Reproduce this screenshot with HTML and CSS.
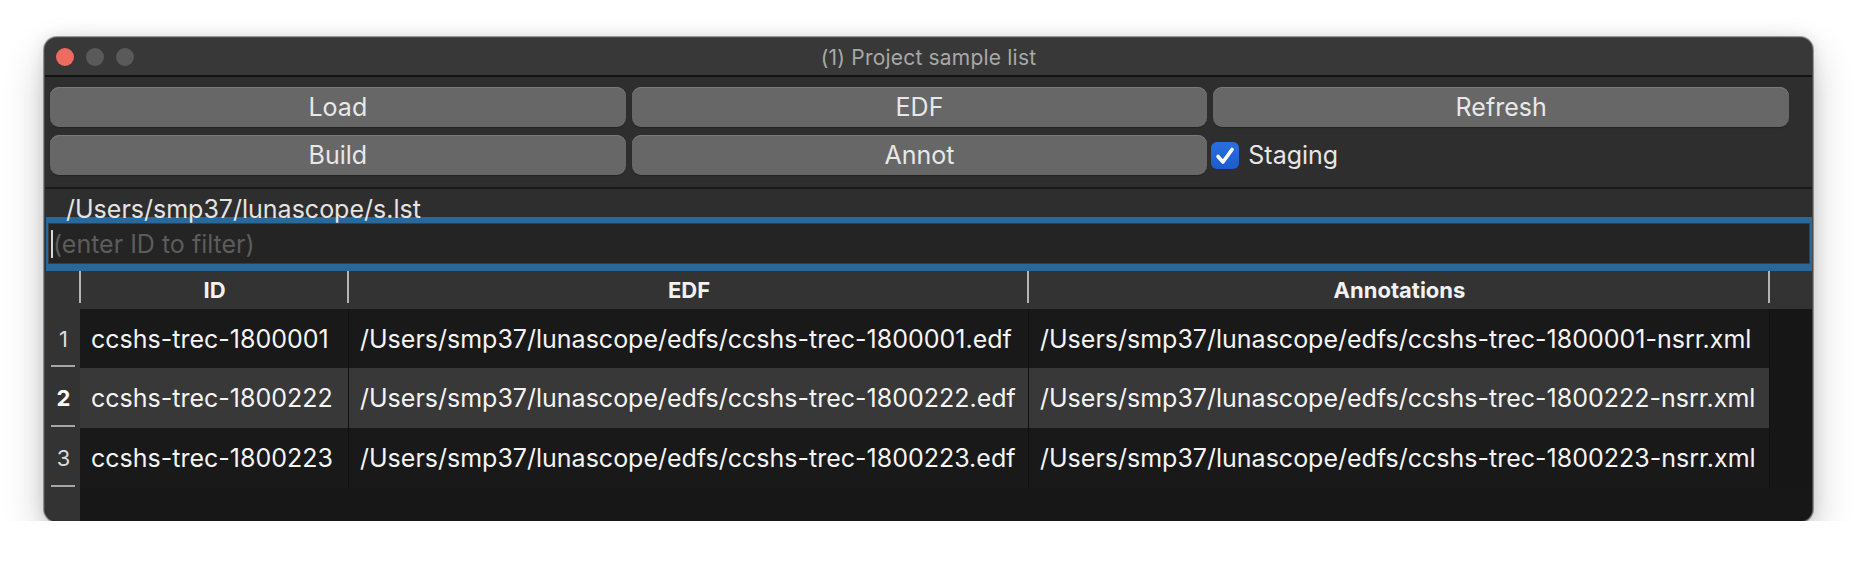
FILE: index.html
```html
<!DOCTYPE html>
<html>
<head>
<meta charset="utf-8">
<title>(1) Project sample list</title>
<link rel="stylesheet" href="styles.css">
</head>
<body>
<div class="window">
  <div class="titlebar">
    <div class="lights">
      <span class="light red"></span>
      <span class="light gray"></span>
      <span class="light gray"></span>
    </div>
    <div class="title">(1) Project sample list</div>
    <div></div>
  </div>
  <div class="toolbar">
    <button class="btn">Load</button>
    <button class="btn">EDF</button>
    <button class="btn">Refresh</button>
    <button class="btn">Build</button>
    <button class="btn">Annot</button>
    <label class="check">
      <span class="box"><svg viewBox="0 0 28 27" width="28" height="27"><path d="M7 14.5 L12 20 L21 7.5" fill="none" stroke="#fff" stroke-width="3.6" stroke-linecap="round" stroke-linejoin="round"/></svg></span>
      <span class="check-label">Staging</span>
    </label>
  </div>
  <div class="path">/Users/smp37/lunascope/s.lst</div>
  <div class="filter">
    <div class="filter-input"><span class="caret"></span><span class="placeholder">(enter ID to filter)</span></div>
  </div>
  <div class="table">
    <div class="corner"></div>
    <div class="hcell sep-left">ID</div>
    <div class="hcell">EDF</div>
    <div class="hcell">Annotations</div>
    <div class="hfill"></div>

    <div class="rowhead">1</div>
    <div class="cell">ccshs-trec-1800001</div>
    <div class="cell">/Users/smp37/lunascope/edfs/ccshs-trec-1800001.edf</div>
    <div class="cell">/Users/smp37/lunascope/edfs/ccshs-trec-1800001-nsrr.xml</div>
    <div class="fill"></div>

    <div class="rowhead current">2</div>
    <div class="cell sel">ccshs-trec-1800222</div>
    <div class="cell sel">/Users/smp37/lunascope/edfs/ccshs-trec-1800222.edf</div>
    <div class="cell sel">/Users/smp37/lunascope/edfs/ccshs-trec-1800222-nsrr.xml</div>
    <div class="fill"></div>

    <div class="rowhead">3</div>
    <div class="cell">ccshs-trec-1800223</div>
    <div class="cell">/Users/smp37/lunascope/edfs/ccshs-trec-1800223.edf</div>
    <div class="cell">/Users/smp37/lunascope/edfs/ccshs-trec-1800223-nsrr.xml</div>
    <div class="fill"></div>

    <div class="rowhead empty"></div>
    <div class="bottomfill"></div>
  </div>
</div>
</body>
</html>
```

FILE: styles.css
```css
* { box-sizing: border-box; }
html, body { margin: 0; padding: 0; background: #ffffff; }
body {
  padding: 38px 0 0 45px;
  font-family: "Inter", "Noto Sans", sans-serif;
}
.window {
  width: 1767px;
  height: 483px;
  border-radius: 12px;
  overflow: hidden;
  background: #2e2e2e;
  display: flex;
  flex-direction: column;
  box-shadow: 0 0 0 1px #4a4a4a, 0 0 0 2px rgba(0,0,0,0.35), 0 18px 40px rgba(0,0,0,0.24), 0 0 16px rgba(0,0,0,0.12);
}
.titlebar {
  height: 39px;
  flex: none;
  background: #383838;
  border-bottom: 2px solid #121212;
  display: grid;
  grid-template-columns: 1fr auto 1fr;
  align-items: center;
}
.lights { display: flex; gap: 12px; padding-left: 11px; padding-top: 1px; }
.light { width: 18px; height: 18px; border-radius: 50%; display: block; }
.light.red { background: #ee6b5f; }
.light.gray { background: #5a5a5a; }
.title {
  color: #a8a8a8;
  font-size: 21px;
  letter-spacing: 0.2px;
  padding-top: 1px;
}
.toolbar {
  flex: none;
  padding: 10px 23px 12px 5px;
  display: grid;
  grid-template-columns: repeat(3, 1fr);
  grid-template-rows: 40px 40px;
  gap: 8px 6px;
  border-bottom: 2px solid #1a1a1a;
}
.btn {
  font-family: inherit;
  font-size: 25px;
  color: #e8e8e8;
  background: #676767;
  border: none;
  border-radius: 9px;
  box-shadow: inset 0 1px 0 #7a7a7a, 0 1px 1px rgba(0,0,0,0.25);
  padding: 0;
  margin: 0;
}
.check { display: flex; align-items: center; gap: 9px; padding-left: 0; }
.box {
  width: 28px; height: 27px; border-radius: 6px;
  background: linear-gradient(#2a6fe0, #1c5ccd);
  display: block;
  margin-left: -2px;
}
.box svg { display: block; }
.check-label { color: #e6e6e6; font-size: 25px; }
.path {
  flex: none;
  height: 28px;
  padding: 8px 0 0 21px;
  color: #ececec;
  font-size: 25px;
  line-height: 25px;
  white-space: nowrap;
  position: relative;
  z-index: 2;
  opacity: 0.96;
}
.filter {
  flex: none;
  height: 54px;
  border-style: solid;
  border-color: #28689b;
  border-width: 6px 2px 7px 2px;
  margin: 0 0 0 1px;
  position: relative;
  z-index: 1;
}
.filter-input {
  height: 100%;
  background: #242424;
  border: 1px solid #3d3d3d;
  display: flex;
  align-items: center;
  padding-left: 2px;
}
.caret { width: 2px; height: 28px; background: #d8d8d8; margin-right: 0; }
.placeholder { color: #5c5c5c; font-size: 25px; }
.table {
  flex: 1;
  display: grid;
  grid-template-columns: 35px 269px 680px 741px 1fr;
  grid-template-rows: 38px 59px 60px 60px 1fr;
  background: #161616;
}
.corner, .hcell, .hfill { background: #333333; }
.hcell {
  position: relative;
  color: #f2f2f2;
  font-weight: 700;
  font-size: 22px;
  display: flex;
  align-items: center;
  justify-content: center;
  padding-bottom: 1px;
}
.hcell::after {
  content: "";
  position: absolute;
  right: 0; top: 0;
  width: 2px; height: 32px;
  background: #b5b5b5;
}
.hcell.sep-left::before {
  content: "";
  position: absolute;
  left: -1px; top: 0;
  width: 2px; height: 32px;
  background: #b5b5b5;
}
.rowhead {
  background: #333333;
  color: #dcdcdc;
  font-size: 22px;
  display: flex;
  align-items: center;
  justify-content: center;
  position: relative;
  padding-left: 2px;
}
.rowhead::after {
  content: "";
  position: absolute;
  left: 6px; width: 24px;
  bottom: 1px; height: 2px;
  background: #a6a6a6;
}
.rowhead.current { color: #ffffff; font-weight: 700; }
.rowhead.empty::after { display: none; }
.cell {
  background: #191919;
  color: #f4f4f4;
  font-size: 25px;
  display: flex;
  align-items: center;
  padding-left: 11px;
  white-space: nowrap;
  border-right: 1px solid #101010;
}
.cell.sel { background: #383838; }
.fill { background: #161616; }
.bottomfill { grid-column: 2 / 6; background: #171717; }
```
